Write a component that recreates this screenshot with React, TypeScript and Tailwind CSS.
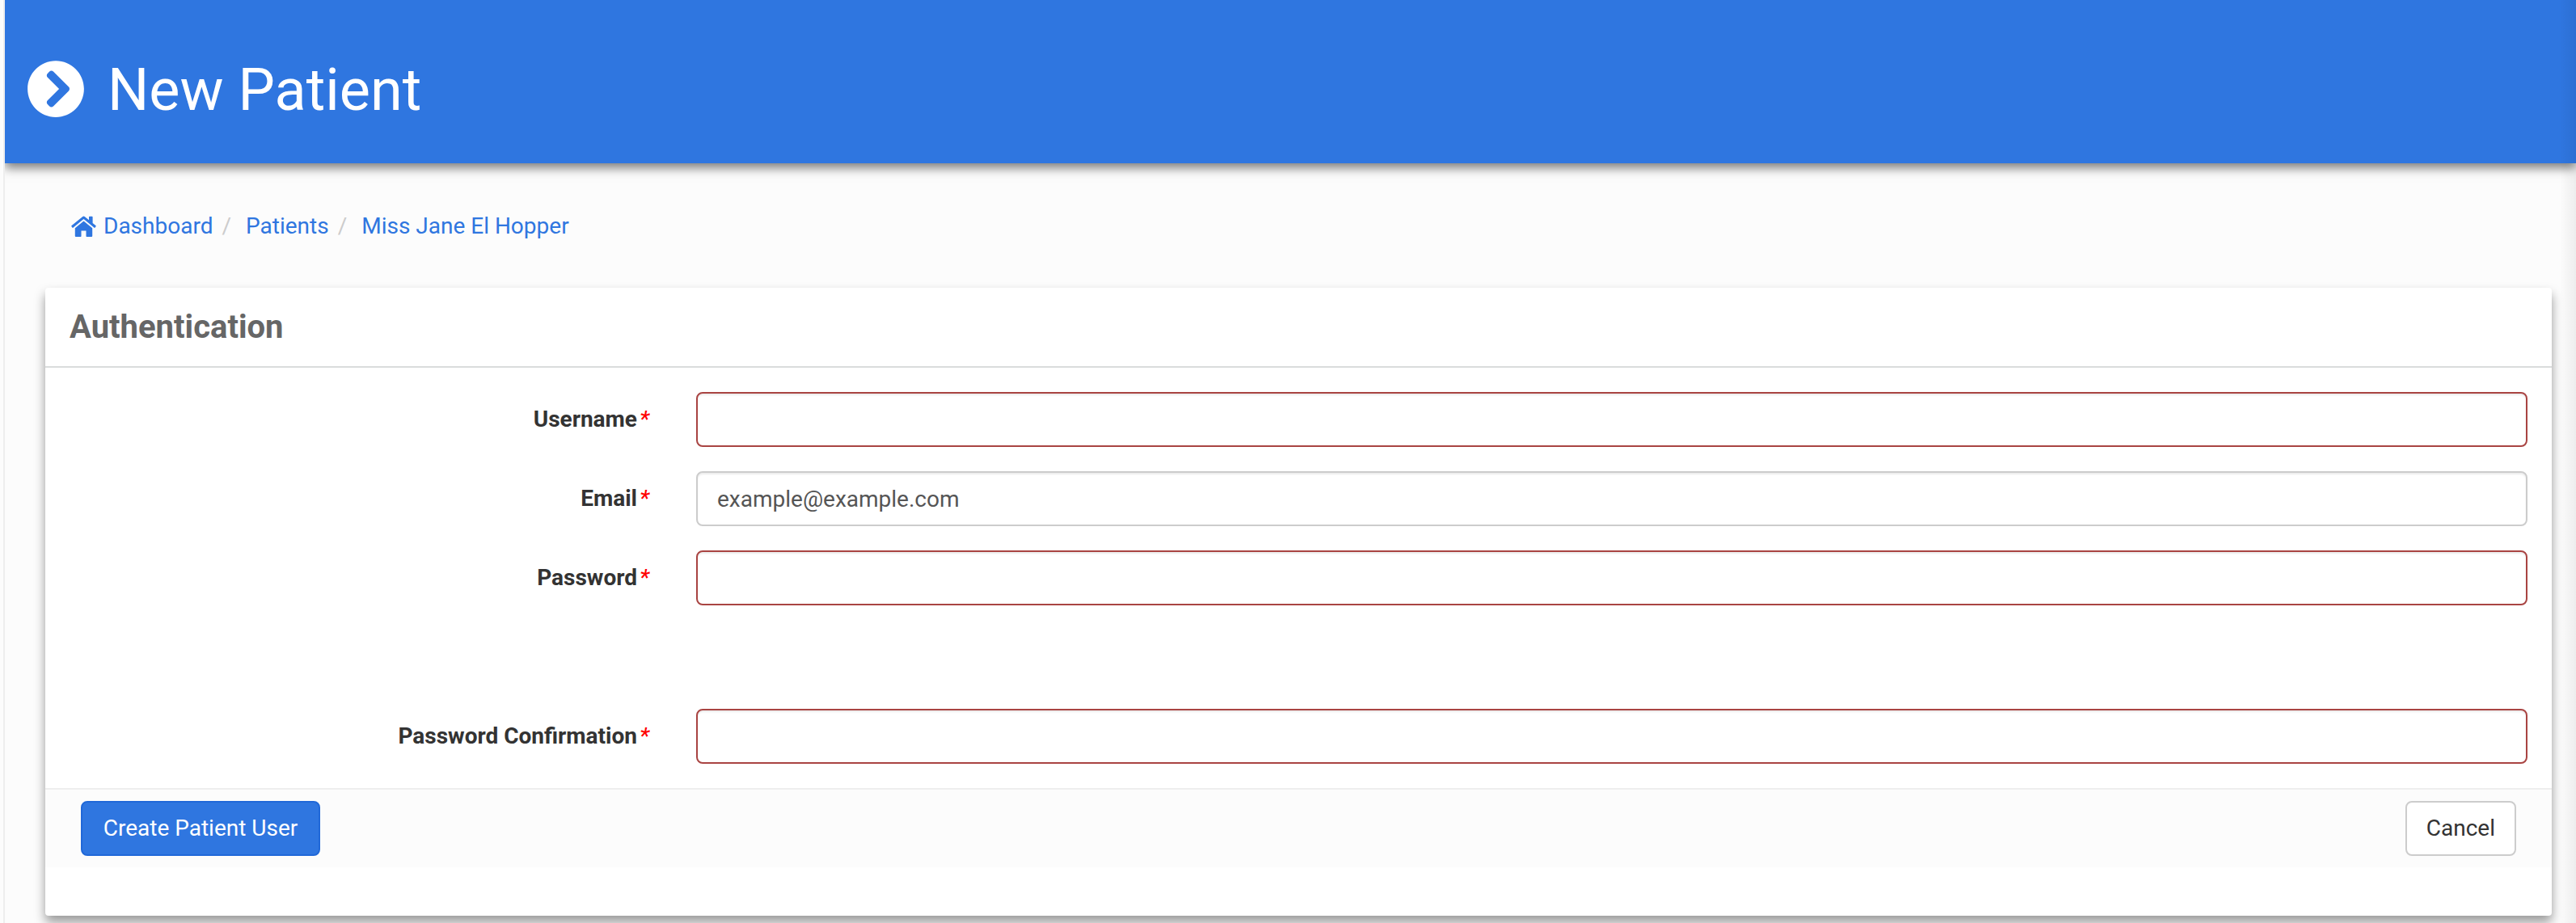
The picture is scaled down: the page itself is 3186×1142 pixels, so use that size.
import { FaChevronCircleRight } from 'react-icons/fa';

const fields = [
    { id: 'username', label: 'Username', type: 'text', value: '', invalid: true },
    { id: 'email', label: 'Email', type: 'email', value: 'example@example.com', invalid: false },
    { id: 'password', label: 'Password', type: 'password', value: '', invalid: true, hint: true },
    { id: 'password-confirmation', label: 'Password Confirmation', type: 'password', value: '', invalid: true },
];

const HomeIcon = () => (
    <svg viewBox="0 0 31 26" fill="currentColor" className="w-[31px] h-[26px]" aria-hidden="true">
        <path d="M14.3 .9Q15.5 0 16.7 .9L22 5.3V1.6Q22 .8 22.8 .8H25.8Q26.6 .8 26.6 1.6V9L30.6 12.3Q31 12.7 30.7 13.1L29.4 14.7Q29 15.1 28.6 14.8L15.5 4 2.4 14.8Q2 15.1 1.6 14.7L.3 13.1Q0 12.7 .4 12.3Z" />
        <path d="M15.5 6.4 26.2 15.2V25Q26.2 26 25.2 26H19.3Q18.5 26 18.5 25.2V18.5H12.5V25.2Q12.5 26 11.7 26H5.8Q4.8 26 4.8 25V15.2Z" />
    </svg>
);

const PageHeader = () => (
    <header className="relative flex items-center gap-7 h-[202px] pt-[18px] px-[27px] bg-[#2f76e0] text-white shadow-[0_6px_12px_rgba(0,0,0,0.5)]">
        <FaChevronCircleRight className="w-[72px] h-[72px]" />
        <h1 className="pt-1 text-7xl font-normal">New Patient</h1>
    </header>
);

const Breadcrumbs = () => (
    <nav className="px-[82px] pt-[58px] pb-14" aria-label="Breadcrumb">
        <ol className="flex items-center leading-10 text-[#2f76e0]">
            <li>
                <a href="#dashboard" className="flex items-center gap-[9px]"><HomeIcon /> Dashboard</a>
            </li>
            <li className="flex">
                <span className="px-[11px] text-[#ccc]">/</span>
                <a href="#patients" className="pl-[7px]">Patients</a>
            </li>
            <li className="flex">
                <span className="px-[11px] text-[#ccc]">/</span>
                <a href="#patient" className="pl-[7px]">Miss Jane El Hopper</a>
            </li>
        </ol>
    </nav>
);

const App = () => (
    <div className="relative min-h-screen pl-1 bg-[#fcfcfc] text-[28px] leading-10 text-[#333] font-[Roboto,sans-serif]">
        <div className="min-h-screen border-l-2 border-[#eee] overflow-hidden">
            <PageHeader />
            <Breadcrumbs />
            <main className="ml-[50px] mr-[30px] pb-2">
                <form className="rounded pb-[60px] bg-white shadow-[0_8px_14px_rgba(0,0,0,0.4)]">
                    <h2 className="px-[30px] py-6 border-b-2 border-[#dadcdc] text-[40px] leading-[49px] font-bold text-[#666]">Authentication</h2>
                    <div className="py-[30px] space-y-[30px]">
                        {fields.map((field) => (
                            <div key={field.id} className={field.hint ? 'flex pb-[98px]' : 'flex'}>
                                <label htmlFor={field.id} className="w-1/4 px-7 pt-[14px] text-right font-bold">
                                    {field.label}<span className="pl-[3px] italic font-medium text-[#f00]">*</span>
                                </label>
                                <div className="w-3/4 px-[30px]">
                                    <input
                                        id={field.id}
                                        type={field.type}
                                        defaultValue={field.value}
                                        className={`block w-full h-[68px] px-6 rounded-lg border-2 bg-white text-[#555] shadow-[inset_0_2px_2px_rgba(0,0,0,0.075)] ${field.invalid ? 'border-[#a94442]' : 'border-[#ccc]'}`}
                                    />
                                </div>
                            </div>
                        ))}
                    </div>
                    <div className="flex justify-between px-11 py-[14px] border-t-2 border-[#eee] bg-[#fcfcfc]">
                        <button type="submit" className="min-w-[296px] h-[68px] px-6 rounded-lg border-2 border-[#2068d8] bg-[#2f76e0] text-white">Create Patient User</button>
                        <button type="button" className="h-[68px] px-6 rounded-lg border-2 border-[#ccc] bg-white">Cancel</button>
                    </div>
                </form>
            </main>
        </div>
        {/* shade cast by the off-canvas panel */}
        <div className="absolute inset-y-0 right-0 w-5 bg-linear-to-l from-black/6 to-transparent pointer-events-none" />
    </div>
);

export default App;
